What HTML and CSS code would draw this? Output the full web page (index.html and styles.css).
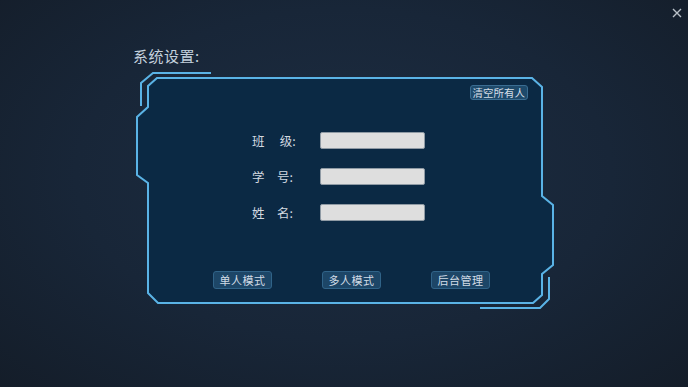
FILE: index.html
```html
<!DOCTYPE html>
<html lang="zh-CN">
<head>
    <meta charset="UTF-8">
    <meta name="viewport" content="width=device-width, initial-scale=1.0">
    <title>系统设置</title>
    <link rel="stylesheet" href="styles.css">
</head>
<body>
    <button type="button" class="close-btn" aria-label="关闭">
        <svg width="10" height="10" viewBox="0 0 10 10">
            <path d="M1 1 L9 9 M9 1 L1 9" stroke="#b9c0c8" stroke-width="1.4" />
        </svg>
    </button>

    <div class="settings">
        <h1 class="settings-title">系统设置:</h1>

        <div class="panel">
            <svg class="panel-frame" width="425" height="243" viewBox="133 70 425 243">
                <path class="frame-fill" d="M157 78 L532 78 L542 87 L542 196 L553 205 L553 265 L542 274 L542 295 L533 303 L158 303 L148 293 L148 183 L137 175 L137 117 L148 107 L148 86 Z" />
                <path class="frame-line" d="M211 73 L153 73 L141 83 L141 106" />
                <path class="frame-line" d="M549 277 L549 299 L540 308 L480 308" />
            </svg>

            <div class="panel-head">
                <button type="button" class="small-btn">清空所有人</button>
            </div>

            <div class="form">
                <label class="form-label">班　 级:</label>
                <input type="text" class="form-input">
                <label class="form-label">学　号:</label>
                <input type="text" class="form-input">
                <label class="form-label">姓　名:</label>
                <input type="text" class="form-input">
            </div>

            <div class="actions">
                <button type="button" class="mode-btn">单人模式</button>
                <button type="button" class="mode-btn">多人模式</button>
                <button type="button" class="mode-btn">后台管理</button>
            </div>
        </div>
    </div>
</body>
</html>
```
FILE: styles.css
```css
html, body {
    margin: 0;
    height: 100%;
}
body {
    font-family: "Noto Sans CJK SC", "Noto Sans", sans-serif;
    background: radial-gradient(ellipse at 50% 45%, #1d2d42 0%, #182638 55%, #141d29 100%);
    overflow: hidden;
}
.close-btn {
    position: absolute;
    top: 3px;
    right: 3px;
    width: 17px;
    height: 17px;
    padding: 3px;
    border: none;
    background: none;
    cursor: pointer;
}
.settings {
    width: 425px;
    margin: 46px 0 0 133px;
}
.settings-title {
    margin: 0;
    height: 24px;
    font-size: 15px;
    line-height: 20px;
    font-weight: normal;
    color: #c3d0dc;
    letter-spacing: 0.5px;
}
.panel {
    position: relative;
    height: 243px;
    display: flex;
    flex-direction: column;
}
.panel-frame {
    position: absolute;
    top: 0;
    left: 0;
    z-index: 0;
}
.frame-fill {
    fill: #0b2944;
    stroke: #5ab3e6;
    stroke-width: 2;
}
.frame-line {
    fill: none;
    stroke: #5ab3e6;
    stroke-width: 2;
}
.panel-head,
.form,
.actions {
    position: relative;
    z-index: 1;
}
.panel-head {
    display: flex;
    justify-content: flex-end;
    padding: 15px 30px 0 0;
}
.small-btn {
    height: 15px;
    padding: 0 2px;
    font-family: inherit;
    font-size: 10.5px;
    line-height: 13px;
    color: #d4dde6;
    background-color: #1e4a6b;
    border: 1px solid #3b6d92;
    border-radius: 3px;
}
.form {
    display: grid;
    grid-template-columns: 68px 105px;
    row-gap: 19px;
    align-items: center;
    margin: 32px 0 0 119px;
}
.form-label {
    font-size: 12.5px;
    color: #d2d9e0;
    line-height: 17px;
}
.form-input {
    box-sizing: border-box;
    width: 105px;
    height: 17px;
    margin: 0;
    background-color: #dedede;
    border: 1px solid #8f9aa4;
    border-radius: 2px;
}
.actions {
    display: flex;
    gap: 50px;
    margin: 50px 0 0 80px;
}
.mode-btn {
    box-sizing: border-box;
    width: 59px;
    height: 18px;
    padding: 0;
    font-family: inherit;
    font-size: 11px;
    line-height: 16px;
    letter-spacing: 0.5px;
    color: #d2dce6;
    background-color: #1d4667;
    border: 1px solid #306388;
    border-radius: 3px;
    cursor: pointer;
}
```
